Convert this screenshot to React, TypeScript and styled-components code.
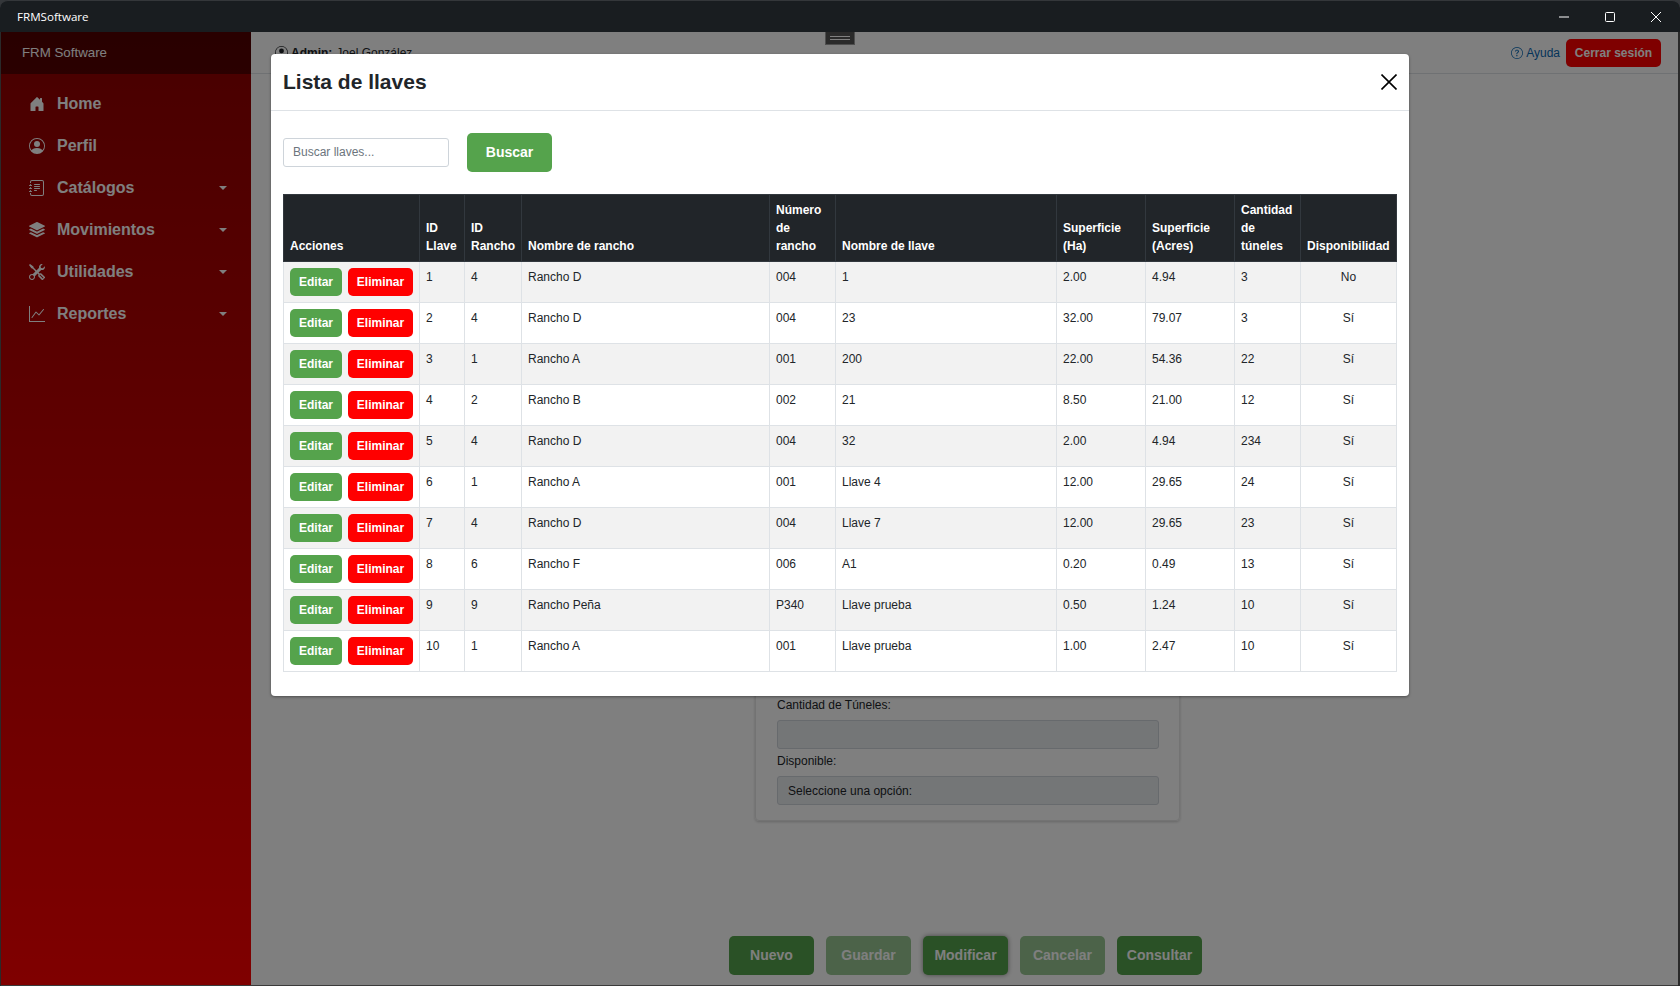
import React from "react";
import styled, { createGlobalStyle } from "styled-components";
import {
  BsHouseDoorFill,
  BsPersonCircle,
  BsJournalText,
  BsStack,
  BsTools,
  BsGraphUp,
  BsQuestionCircle,
} from "react-icons/bs";

const Global = createGlobalStyle`
  html, body { margin: 0; padding: 0; height: 100%; overflow: hidden; background: #34373a; }
  * { box-sizing: border-box; }
  body { font-family: "Liberation Sans", Arial, sans-serif; color: #212529; }
`;

const Window = styled.div`
  display: flex;
  flex-direction: column;
  width: 1680px;
  height: 986px;
`;

const TitleBar = styled.div`
  flex: 0 0 32px;
  display: flex;
  align-items: center;
  justify-content: space-between;
  background: #191d20;
  border-top: 1px solid #34373a;
  border-radius: 8px 8px 0 0;
  color: #fff;
  font: 11.6px "Open Sans", sans-serif;
  padding: 0 1px 0 17px;
`;

const WinControls = styled.div`
  display: flex;
  align-items: center;
  height: 31px;
`;

const WinBtn = styled.button`
  width: 46px;
  height: 31px;
  border: 0;
  background: none;
  padding: 0;
  display: flex;
  align-items: center;
  justify-content: center;
  color: #fff;
`;

const Shell = styled.div`
  position: relative;
  flex: 1;
  display: flex;
  min-height: 0;
`;

const Sidebar = styled.aside`
  flex: 0 0 251px;
  display: flex;
  flex-direction: column;
  background: linear-gradient(180deg, #8f0000 0%, #ff0000 100%);
  color: #fff;
`;

const Brand = styled.div`
  height: 42px;
  display: flex;
  align-items: center;
  padding: 0 0 2px 22px;
  font-size: 13.3px;
  background: rgba(0, 0, 0, 0.42);
`;

const Nav = styled.nav`
  display: flex;
  flex-direction: column;
  padding-top: 9px;
`;

const NavItem = styled.a`
  height: 42px;
  display: flex;
  align-items: center;
  padding: 0 24px 0 29px;
  gap: 12px;
  font-size: 16px;
  font-weight: 700;
  color: #fff;
  svg { flex: 0 0 16px; }
`;

const NavLabel = styled.span`
  flex: 1;
`;

const Caret = styled.span`
  width: 0;
  height: 0;
  border-left: 4px solid transparent;
  border-right: 4px solid transparent;
  border-top: 4px solid #fff;
`;

const Main = styled.main`
  flex: 1;
  display: flex;
  flex-direction: column;
  background: #fff;
  min-width: 0;
`;

const TopBar = styled.header`
  flex: 0 0 42px;
  display: flex;
  align-items: center;
  justify-content: space-between;
  padding: 0 19px 0 24px;
  border-bottom: 1px solid #dee2e6;
  font-size: 12px;
`;

const Admin = styled.div`
  display: flex;
  align-items: center;
  gap: 3px;
  font-size: 12px;
  b { margin-right: 1px; }
`;

const TopActions = styled.div`
  display: flex;
  align-items: center;
  gap: 6px;
`;

const Help = styled.a`
  display: flex;
  align-items: center;
  gap: 3px;
  font-size: 12px;
  color: #0a69b5;
`;

const Logout = styled.button`
  width: 95px;
  height: 28px;
  border: 0;
  border-radius: 5px;
  background: #ff0000;
  color: #fff;
  font: 700 12px "Liberation Sans", Arial, sans-serif;
`;

const Content = styled.div`
  flex: 1;
  display: flex;
  flex-direction: column;
  align-items: center;
  justify-content: flex-end;
  padding-bottom: 11px;
`;

const FormCard = styled.section`
  width: 425px;
  height: 720px;
  display: flex;
  flex-direction: column;
  justify-content: flex-end;
  padding: 0 20px 15px 21px;
  margin: 0 0 115px 4px;
  border: 1px solid #e6e6e6;
  border-radius: 4px;
  box-shadow: 0 1px 3px rgba(0, 0, 0, 0.2);
`;

const FieldLabel = styled.label`
  display: block;
  font-size: 12px;
  line-height: 14px;
  margin-bottom: 8px;
`;

const FieldBox = styled.div`
  height: 29px;
  display: flex;
  align-items: center;
  padding-left: 10px;
  margin-bottom: 5px;
  border: 1px solid #ced4da;
  border-radius: 3px;
  background: #e9ecef;
  font-size: 12px;
  &:last-child { margin-bottom: 0; }
`;

const ActionBar = styled.div`
  display: flex;
  gap: 12px;
`;

const ActionBtn = styled.button<{ $off?: boolean; $focus?: boolean }>`
  width: 85px;
  height: 39px;
  border: 0;
  border-radius: 5px;
  padding: 0 0 2px;
  background: #55a34c;
  color: #fff;
  font: 700 14px "Liberation Sans", Arial, sans-serif;
  opacity: ${(p) => (p.$off ? 0.6 : 1)};
  box-shadow: ${(p) => (p.$focus ? "0 0 5px rgba(0,0,0,.45)" : "none")};
`;

const Overlay = styled.div`
  position: absolute;
  inset: 0;
  background: rgba(0, 0, 0, 0.5);
  box-shadow: inset 1px 0 0 #2a2a2a, inset -2px 0 0 #2a2a2a, inset 0 -1px 0 #3a3a3a;
  display: flex;
  justify-content: center;
  align-items: flex-start;
  padding-top: 22px;
`;

const DragHandle = styled.div`
  position: absolute;
  top: 0;
  left: 825px;
  width: 30px;
  height: 13px;
  display: flex;
  flex-direction: column;
  justify-content: center;
  gap: 2px;
  padding: 0 4px;
  background: #2a2a2a;
  border: 1px solid #4e4e4e;
  border-top: 0;
  &::before, &::after {
    content: "";
    height: 1px;
    background: #808080;
  }
`;

const Modal = styled.div`
  width: 1138px;
  height: 642px;
  background: #fff;
  border-radius: 4px;
  box-shadow: 0 1px 3px rgba(0, 0, 0, 0.4);
  display: flex;
  flex-direction: column;
`;

const ModalHead = styled.div`
  flex: 0 0 57px;
  display: flex;
  align-items: center;
  justify-content: space-between;
  padding: 0 12px;
  border-bottom: 1px solid #dee2e6;
`;

const ModalTitle = styled.h2`
  margin: 0;
  font-size: 21px;
  font-weight: 700;
  color: #212529;
`;

const CloseBtn = styled.button`
  width: 16px;
  height: 16px;
  border: 0;
  padding: 0;
  background: none;
  display: flex;
`;

const ModalBody = styled.div`
  padding: 22px 12px 0;
`;

const SearchRow = styled.div`
  display: flex;
  align-items: center;
  gap: 18px;
  margin-bottom: 22px;
`;

const SearchInput = styled.input`
  width: 166px;
  height: 29px;
  padding: 0 9px 2px;
  border: 1px solid #ced4da;
  border-radius: 3px;
  font: 12px "Liberation Sans", Arial, sans-serif;
  &::placeholder { color: #6c757d; opacity: 1; }
`;

const SearchBtn = styled.button`
  width: 85px;
  height: 39px;
  border: 0;
  border-radius: 5px;
  padding: 0 0 2px;
  background: #55a34c;
  color: #fff;
  font: 700 14px "Liberation Sans", Arial, sans-serif;
`;

const Table = styled.table`
  width: 1113px;
  table-layout: fixed;
  border-collapse: collapse;
  font-size: 12px;
  line-height: 18px;
`;

const Col = styled.col<{ $w: number }>`
  width: ${(p) => p.$w}px;
`;

const Th = styled.th`
  padding: 6px;
  background: #212529;
  color: #fff;
  font-weight: 700;
  text-align: left;
  vertical-align: bottom;
  border: 1px solid #32383e;
`;

const Row = styled.tr<{ $striped: boolean }>`
  height: 41px;
  background: ${(p) => (p.$striped ? "#f2f2f2" : "#fff")};
`;

const Td = styled.td<{ $center?: boolean }>`
  padding: 6px 6px 5px;
  border: 1px solid #dee2e6;
  vertical-align: top;
  text-align: ${(p) => (p.$center ? "center" : "left")};
  color: #212529;
`;

const RowActions = styled.div`
  display: flex;
  gap: 6px;
`;

const RowBtn = styled.button<{ $danger?: boolean; $w: number }>`
  width: ${(p) => p.$w}px;
  height: 28px;
  border: 0;
  border-radius: 5px;
  padding: 0;
  background: ${(p) => (p.$danger ? "#ff0000" : "#55a34c")};
  color: #fff;
  font: 700 12px "Liberation Sans", Arial, sans-serif;
`;

const nav = [
  { label: "Home", Icon: BsHouseDoorFill },
  { label: "Perfil", Icon: BsPersonCircle },
  { label: "Catálogos", Icon: BsJournalText, caret: true },
  { label: "Movimientos", Icon: BsStack, caret: true },
  { label: "Utilidades", Icon: BsTools, caret: true },
  { label: "Reportes", Icon: BsGraphUp, caret: true },
];

const widths = [136, 45, 57, 248, 66, 221, 89, 89, 66, 96];

const rows = [
  ["1", "4", "Rancho D", "004", "1", "2.00", "4.94", "3", "No"],
  ["2", "4", "Rancho D", "004", "23", "32.00", "79.07", "3", "Sí"],
  ["3", "1", "Rancho A", "001", "200", "22.00", "54.36", "22", "Sí"],
  ["4", "2", "Rancho B", "002", "21", "8.50", "21.00", "12", "Sí"],
  ["5", "4", "Rancho D", "004", "32", "2.00", "4.94", "234", "Sí"],
  ["6", "1", "Rancho A", "001", "Llave 4", "12.00", "29.65", "24", "Sí"],
  ["7", "4", "Rancho D", "004", "Llave 7", "12.00", "29.65", "23", "Sí"],
  ["8", "6", "Rancho F", "006", "A1", "0.20", "0.49", "13", "Sí"],
  ["9", "9", "Rancho Peña", "P340", "Llave prueba", "0.50", "1.24", "10", "Sí"],
  ["10", "1", "Rancho A", "001", "Llave prueba", "1.00", "2.47", "10", "Sí"],
];

export default function App() {
  return (
    <Window>
      <Global />
      <TitleBar>
        <span>FRMSoftware</span>
        <WinControls>
          <WinBtn aria-label="Minimizar">
            <svg width="10" height="10" viewBox="0 0 10 10"><path d="M0 5h10" stroke="#fff" /></svg>
          </WinBtn>
          <WinBtn aria-label="Maximizar">
            <svg width="10" height="10" viewBox="0 0 10 10"><rect x=".5" y=".5" width="9" height="9" rx="1" fill="none" stroke="#fff" /></svg>
          </WinBtn>
          <WinBtn aria-label="Cerrar">
            <svg width="10" height="10" viewBox="0 0 10 10"><path d="M0 0l10 10M10 0L0 10" stroke="#fff" /></svg>
          </WinBtn>
        </WinControls>
      </TitleBar>
      <Shell>
        <Sidebar>
          <Brand>FRM Software</Brand>
          <Nav>
            {nav.map(({ label, Icon, caret }) => (
              <NavItem key={label}>
                <Icon size={16} />
                <NavLabel>{label}</NavLabel>
                {caret && <Caret />}
              </NavItem>
            ))}
          </Nav>
        </Sidebar>
        <Main>
          <TopBar>
            <Admin>
              <BsPersonCircle size={13} />
              <b>Admin:</b> Joel González
            </Admin>
            <TopActions>
              <Help>
                <BsQuestionCircle size={12} /> Ayuda
              </Help>
              <Logout>Cerrar sesión</Logout>
            </TopActions>
          </TopBar>
          <Content>
            <FormCard>
              <FieldLabel>Cantidad de Túneles:</FieldLabel>
              <FieldBox />
              <FieldLabel>Disponible:</FieldLabel>
              <FieldBox>Seleccione una opción:</FieldBox>
            </FormCard>
            <ActionBar>
              <ActionBtn>Nuevo</ActionBtn>
              <ActionBtn $off>Guardar</ActionBtn>
              <ActionBtn $focus>Modificar</ActionBtn>
              <ActionBtn $off>Cancelar</ActionBtn>
              <ActionBtn>Consultar</ActionBtn>
            </ActionBar>
          </Content>
        </Main>
        <Overlay>
          <DragHandle />
          <Modal>
            <ModalHead>
              <ModalTitle>Lista de llaves</ModalTitle>
              <CloseBtn aria-label="Cerrar">
                <svg width="16" height="16" viewBox="0 0 16 16"><path d="M.5.5l15 15M15.5.5l-15 15" stroke="#000" strokeWidth="1.6" /></svg>
              </CloseBtn>
            </ModalHead>
            <ModalBody>
              <SearchRow>
                <SearchInput placeholder="Buscar llaves..." />
                <SearchBtn>Buscar</SearchBtn>
              </SearchRow>
              <Table>
                <colgroup>
                  {widths.map((w, i) => (
                    <Col key={i} $w={w} />
                  ))}
                </colgroup>
                <thead>
                  <tr>
                    <Th>Acciones</Th>
                    <Th>ID Llave</Th>
                    <Th>ID Rancho</Th>
                    <Th>Nombre de rancho</Th>
                    <Th>Número de rancho</Th>
                    <Th>Nombre de llave</Th>
                    <Th>Superficie (Ha)</Th>
                    <Th>Superficie (Acres)</Th>
                    <Th>Cantidad de túneles</Th>
                    <Th>Disponibilidad</Th>
                  </tr>
                </thead>
                <tbody>
                  {rows.map((r, i) => (
                    <Row key={r[0]} $striped={i % 2 === 0}>
                      <Td>
                        <RowActions>
                          <RowBtn $w={52}>Editar</RowBtn>
                          <RowBtn $w={65} $danger>Eliminar</RowBtn>
                        </RowActions>
                      </Td>
                      {r.map((c, j) => (
                        <Td key={j} $center={j === 8}>{c}</Td>
                      ))}
                    </Row>
                  ))}
                </tbody>
              </Table>
            </ModalBody>
          </Modal>
        </Overlay>
      </Shell>
    </Window>
  );
}
